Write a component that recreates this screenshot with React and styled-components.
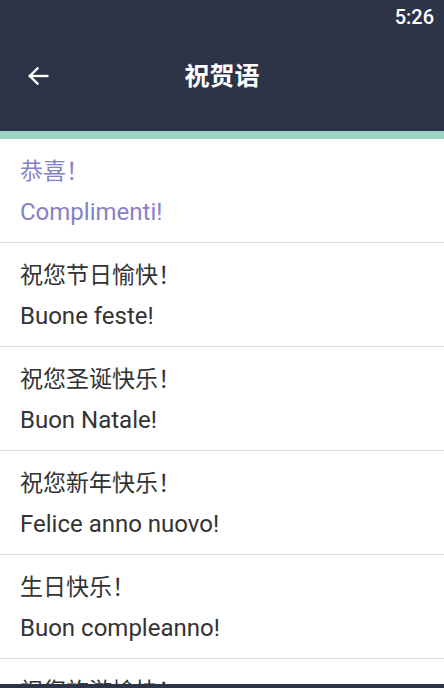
import React from 'react';
import styled, { createGlobalStyle } from 'styled-components';

const GlobalStyle = createGlobalStyle`
	body {
		margin: 0;
		font-family: Roboto, "Noto Sans CJK SC", sans-serif;
		background: #ffffff;
	}
`;

const Screen = styled.div`
	width: 444px;
	height: 688px;
	display: flex;
	flex-direction: column;
	overflow: hidden;
	background: #ffffff;
`;

const Header = styled.header`
	background-color: #2e3447;
	color: #ffffff;
	flex-shrink: 0;
`;

const StatusBar = styled.div`
	height: 34px;
	display: flex;
	justify-content: flex-end;
	align-items: center;
	padding: 0 10px;
	font-size: 20px;
	font-weight: 500;
`;

const Toolbar = styled.div`
	height: 97px;
	display: flex;
	align-items: center;
	position: relative;
	padding: 0 22px;
`;

const BackBtn = styled.button`
	width: 32px;
	height: 32px;
	padding: 0;
	border: none;
	background: transparent;
	color: #ffffff;
	display: flex;
	align-items: center;
	justify-content: center;
	cursor: pointer;
	margin-top: -14px;
`;

const Title = styled.div`
	position: absolute;
	left: 0;
	right: 0;
	top: 22px;
	text-align: center;
	font-size: 25px;
	font-weight: 700;
	pointer-events: none;
`;

const Accent = styled.div`
	height: 8px;
	background-color: #9dd5c2;
	flex-shrink: 0;
`;

const List = styled.ul`
	list-style: none;
	margin: 0;
	padding: 0;
	flex: 1;
	overflow: hidden;
`;

const Item = styled.li`
	padding: 13px 20px 10px;
	border-bottom: 1px solid #dcdcdc;
	color: ${(p) => (p.active ? '#8680c9' : '#333333')};
`;

const Line = styled.div`
	height: 40px;
	line-height: 40px;
	white-space: nowrap;
	font-size: ${(p) => (p.latin ? '24px' : '23px')};
`;

const NavBar = styled.div`
	height: 4px;
	background-color: #2e3447;
	flex-shrink: 0;
`;

const phrases = [
	{ cn: '恭喜！', it: 'Complimenti!' },
	{ cn: '祝您节日愉快！', it: 'Buone feste!' },
	{ cn: '祝您圣诞快乐！', it: 'Buon Natale!' },
	{ cn: '祝您新年快乐！', it: 'Felice anno nuovo!' },
	{ cn: '生日快乐！', it: 'Buon compleanno!' },
	{ cn: '祝您旅游愉快！', it: 'Buon viaggio!' },
];

const App = () => {
	return (
		<Screen>
			<GlobalStyle />
			<Header>
				<StatusBar>5:26</StatusBar>
				<Toolbar>
					<BackBtn aria-label="back">
						<svg width="28" height="28" viewBox="0 0 24 24" fill="none" stroke="currentColor" strokeWidth="2" strokeLinecap="square">
							<path d="M20 12H5" />
							<path d="M11.5 5.5L5 12l6.5 6.5" />
						</svg>
					</BackBtn>
					<Title>祝贺语</Title>
				</Toolbar>
			</Header>
			<Accent />
			<List>
				{phrases.map((p, i) => (
					<Item key={p.it} active={i === 0}>
						<Line>{p.cn}</Line>
						<Line latin>{p.it}</Line>
					</Item>
				))}
			</List>
			<NavBar />
		</Screen>
	);
};

export default App;
